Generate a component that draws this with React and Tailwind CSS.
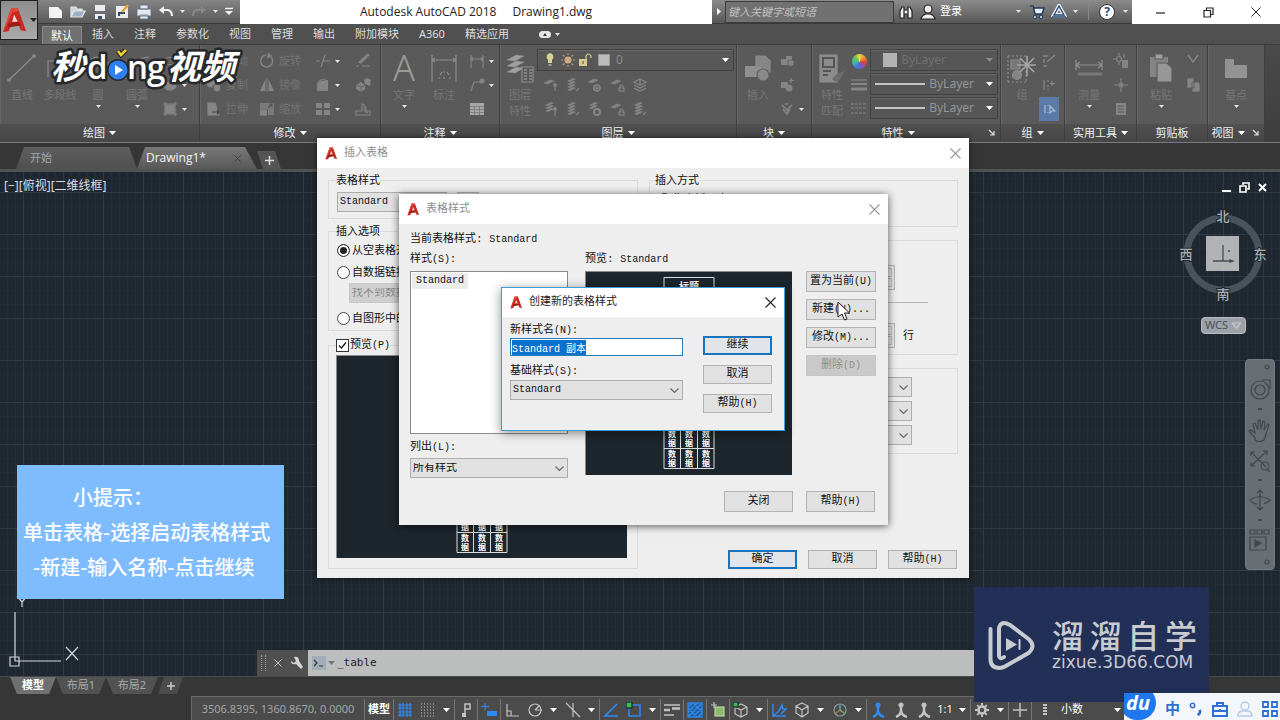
import { useEffect, useRef } from "react";

const UI = "font-['Noto_Sans','Noto_Sans_CJK_SC',sans-serif]";
const DLG = "font-['Liberation_Mono','Noto_Sans_CJK_SC',monospace]";

/* ---------- small shared pieces ---------- */

function Svg({ size = 16, w, h, vb = "0 0 16 16", className = "", children }) {
  return (
    <svg
      width={w || size}
      height={h || size}
      viewBox={vb}
      fill="none"
      stroke="currentColor"
      strokeWidth="1.2"
      aria-hidden="true"
      className={"shrink-0 " + className}
    >
      {children}
    </svg>
  );
}

function Caret({ className = "text-white" }) {
  return (
    <svg width="7" height="4" viewBox="0 0 7 4" fill="currentColor" aria-hidden="true" className={"shrink-0 " + className}>
      <path d="M0 0h7L3.5 4z" />
    </svg>
  );
}

function MiniCaret() {
  return (
    <svg width="5" height="3" viewBox="0 0 5 3" fill="currentColor" aria-hidden="true" className="shrink-0 text-[#e4e4e4]">
      <path d="M0 0h5L2.5 3z" />
    </svg>
  );
}

function Logo({ size = 14 }) {
  return (
    <svg width={size} height={size} viewBox="0 0 28 28" aria-hidden="true" className="shrink-0">
      <path d="M10 1h7l9 25-6-1-2-6h-8l-3 7-6 1z" fill="#c62a21" />
      <path d="M13 8l4 8h-6z" fill="#f3d9d6" />
      <path d="M10 1h7l1 3-7 2-9 20-1 1z" fill="#e5463b" />
      <path d="M7 18l11-2 2 4-14 2z" fill="#9c1a14" />
    </svg>
  );
}

function CloseX({ size = 11, className = "text-[#999]" }) {
  return (
    <svg width={size} height={size} viewBox="0 0 11 11" stroke="currentColor" strokeWidth="1.1" aria-hidden="true" className={className}>
      <path d="M.5.5l10 10M10.5.5l-10 10" />
    </svg>
  );
}

/* ---------- icon drawings ---------- */

const ic = {
  ellipse: <Svg><ellipse cx="8" cy="8" rx="6" ry="3.5" /><path d="M8 8h6" /></Svg>,
  hatch: <Svg><ellipse cx="8" cy="9" rx="6" ry="4" fill="currentColor" /></Svg>,
  region: <Svg><rect x="4" y="4" width="8" height="8" fill="currentColor" /><path d="M1 3h14M1 13h14M3 1v14M13 1v14" /></Svg>,
  move: <Svg><path d="M8 1v14M1 8h14M6 3l2-2 2 2M6 13l2 2 2-2M3 6L1 8l2 2M13 6l2 2-2 2" /></Svg>,
  copy: <Svg><circle cx="5" cy="6" r="4" fill="currentColor" /><circle cx="11" cy="11" r="4" fill="currentColor" stroke="#595959" /></Svg>,
  stretch: <Svg><path d="M2 2h7l4 12H2z" fill="currentColor" /><path d="M6 11h7M11 9l2 2-2 2" stroke="#444" /></Svg>,
  rotate: <Svg><path d="M11 3a6 6 0 1 1-4-1" strokeWidth="1.5" /><path d="M9 0l3 3-4 2" fill="currentColor" /></Svg>,
  mirror: <Svg><path d="M6.500 2v12H1zM9.500 2v12H15z" fill="currentColor" stroke="none" /><path d="M8 1v14" strokeWidth=".8" /></Svg>,
  scale: <Svg><path d="M1 2h14v12H9V8H1z" fill="currentColor" opacity=".75" stroke="none" /><rect x="1.500" y="9" width="6" height="5" fill="currentColor" /><path d="M9 7l4-4M10 3h3v3" stroke="#555" /></Svg>,
  trim: <Svg><path d="M1 8h4M7 8h8M10 2L6 14" /></Svg>,
  fillet: <Svg><path d="M2 14V9q1-6 11-6v11z" fill="currentColor" stroke="none" /><path d="M2 8q2-6 9-6" /></Svg>,
  array: <Svg><path d="M1 2h6v5H1zM9 2h6v5H9zM1 9h6v5H1zM9 9h6v5H9z" fill="currentColor" stroke="none" /></Svg>,
  erase: <Svg><path d="M4 9l9-8 1 1-8 8z" fill="currentColor" /><path d="M1 13h3M7 13h8" /></Svg>,
  explode: <Svg><path d="M1 8l5-3 4 3v4l-4 3-5-3zM9 3l3-2 4 2-1 6-5-2z" fill="currentColor" stroke="none" /><path d="M1 8l5 2 4-2M6 10v5" stroke="#5a5a5a" strokeWidth=".8" /></Svg>,
  offset: <Svg><path d="M1 14h14v-4h-4q0-7-4-7v7H1zM9 6q0 5 4 6" /></Svg>,
  dimlin: <Svg><path d="M2 2v13M14 2v13M2 6h12M4 4.500L2 6l2 1.500M12 4.500L14 6l-2 1.500" /></Svg>,
  leader: <Svg><path d="M2 14L5 5h7" /><circle cx="13" cy="4" r="2" fill="currentColor" /></Svg>,
  table: <Svg><path d="M1 2h14v12H1z" fill="#a8a8a8" stroke="none" /><path d="M1 5.500h14M1 8.500h14M1 11.500h14M5.500 5v9M10.500 5v9" stroke="#777" strokeWidth=".8" /></Svg>,
  cut: <Svg><path d="M3 2l5 7 5-7" strokeWidth="1.500" /></Svg>,
  copyDoc: <Svg><path d="M2 1h7v10H2zM7 5h6l2 2v8H7z" fill="currentColor" stroke="#5b5b5b" strokeWidth=".8" /></Svg>,
  blockNew: <Svg><path d="M2 6h7v6H2zM7 3h6v4H7z" fill="currentColor" stroke="none" /><circle cx="12" cy="10" r="3.200" fill="currentColor" stroke="#595959" strokeWidth=".7" /></Svg>,
  blockEdit: <Svg><path d="M2 5h7v6H2z" fill="currentColor" stroke="none" /><circle cx="10" cy="11" r="3" fill="currentColor" /><path d="M12 1v5M10 3.500h5" /></Svg>,
  attrib: <Svg><path d="M3 4l5 5 5-5M4 8l4 5 3-5M6 3h3" strokeWidth="1.600" /></Svg>,
  grpA: <Svg><path d="M2 3h5M2 13h4M3 6v4M6 9l8-7" strokeWidth="1.500" /></Svg>,
  grpB: <Svg><path d="M3 3v10M7 3v2M7 8v2M7 12v1M11 4v5M9 6.500h5" /></Svg>,
  grpC: <Svg><path d="M4 4v8M7 4v1M7 11v1M9 5l5 5h-3l-2 2z" /></Svg>,
  utilA: <Svg><circle cx="6" cy="6" r="2.500" /><path d="M6 0v3M6 9v3M0 6h3M11 1v4" /><path d="M9 7h6v8H9z" fill="currentColor" stroke="none" /></Svg>,
  utilB: <Svg><path d="M8 1v14M1 8h14M6 6l4 4M10 6l-4 4" /></Svg>,
  utilC: <Svg><path d="M3 2h10v12H3z" fill="currentColor" stroke="none" /><path d="M5 5h6M5 8h6M5 11h6" stroke="#585858" /></Svg>,
  lay1: <Svg><path d="M1 6l6-3 4 1-6 3z" fill="currentColor" strokeWidth=".6" /><circle cx="12" cy="8" r="2" fill="currentColor" stroke="none" /><path d="M12 9v5" /></Svg>,
  lay2: <Svg><path d="M2 4l6-3 3 1-6 3zM2 7l6-3 3 1-6 3zM2 10l6-3 3 1-6 3zM2 13l6-3 3 1-6 3z" fill="currentColor" stroke="none" /><path d="M11 14l3-3" /></Svg>,
  lay3: <Svg><path d="M1 5l6-3 4 1-6 3z" fill="currentColor" strokeWidth=".6" /><circle cx="10" cy="11" r="3" strokeWidth="1.600" /><circle cx="10" cy="11" r="1" fill="currentColor" /></Svg>,
  lay4: <Svg><path d="M1 6l6-3 4 1-6 3z" fill="currentColor" strokeWidth=".6" /><path d="M9 11h5v3H9zM10 11V9q1.500-2 3 0v2" /></Svg>,
  lay5: <Svg><path d="M2 5l6-3 6 3-6 3zM2 8l6 3 6-3M2 11l6 3 6-3M8 1v7" /></Svg>,
  lay6: <Svg><path d="M2 4l6-3 3 1-6 3zM2 7l6-3 3 1-6 3zM2 10l6-3 3 1-6 3z" fill="currentColor" stroke="none" /><circle cx="12" cy="8" r="2" fill="currentColor" stroke="none" /><path d="M12 9v6" /></Svg>,
  lay7: <Svg><path d="M2 4l6-3 3 1-6 3zM2 7l6-3 3 1-6 3z" fill="currentColor" stroke="none" /><circle cx="10" cy="11" r="3" strokeWidth="2" /></Svg>,
};

/* ---------- ribbon ---------- */

function Big({ icon, label, label2, caret, w }) {
  return (
    <button type="button" className={"flex h-[74px] flex-col items-center whitespace-nowrap " + w}>
      <span className="flex h-[38px] items-center text-[#8d8d8d]">{icon}</span>
      <span className="text-[11px] leading-4 text-[#777]">{label}</span>
      {label2 && <span className="text-[11px] leading-4 text-[#777]">{label2}</span>}
      {caret && <span className="mt-0.5 flex"><MiniCaret /></span>}
    </button>
  );
}

function Small({ icon, label, caret, active }) {
  return (
    <button
      type="button"
      className={
        "flex h-6 items-center gap-1 text-[11px] " +
        (active ? "bg-[#5b7aa8] px-1 text-[#a8bbd6]" : "text-[#858585]")
      }
    >
      {icon}
      {label && <span className="text-[#747474]">{label}</span>}
      {caret && <MiniCaret />}
    </button>
  );
}

function Panel({ title, w, caret = true, launcher, children }) {
  return (
    <section className={"flex shrink-0 flex-col border-r border-[#3f3f3f] shadow-[inset_1px_0_0_#676767] " + w}>
      <div className="flex flex-1 items-start pt-1 pl-1">{children}</div>
      <footer className="flex h-[18px] items-center justify-center gap-1 bg-gradient-to-b from-[#505050] to-[#474747] text-[11px] text-[#f0f0f0]">
        <span className={launcher ? "ml-auto" : ""}>{title}</span>
        {caret && <Caret />}
        {launcher && (
          <Svg size={8} vb="0 0 8 8" className="mr-1 ml-auto text-[#ddd]">
            <path d="M1 1l5 5M6 2v4H2" />
          </Svg>
        )}
      </footer>
    </section>
  );
}

function PropBox({ children, dim }) {
  return (
    <button
      type="button"
      className={
        "flex h-[22px] w-[128px] items-center justify-end border border-[#434343] bg-[#565656] pr-1 text-xs shadow-[inset_0_1px_0_#686868] " +
        (dim ? "text-[#717171]" : "text-[#959595]")
      }
    >
      {children}
    </button>
  );
}

function Ribbon() {
  return (
    <div className="flex h-[99px] overflow-hidden border-t border-b border-t-[#3c3c3c] border-b-[#7b7b7b] bg-gradient-to-b from-[#4a4a4a] to-[#3e3e3e]">
      <div className="flex bg-[#5a5a5a]">
        <Panel title="绘图" w="w-[200px]">
          <Big w="w-[36px]" label="直线" icon={<Svg size={30} vb="0 0 30 30"><path d="M2 27L27 3" /><path d="M1 26h2v2H1zM26 2h2v2h-2z" /></Svg>} />
          <Big w="w-[40px]" label="多段线" icon={<Svg size={30} vb="0 0 30 30"><path d="M3 24V8h16q8 8 0 16h-6" /></Svg>} />
          <Big w="w-[36px]" label="圆" caret icon={<Svg size={30} vb="0 0 30 30"><circle cx="15" cy="15" r="11" /><path d="M15 15l8-8" /></Svg>} />
          <Big w="w-[42px]" label="圆弧" caret icon={<Svg size={30} vb="0 0 30 30"><path d="M3 26Q6 6 27 4" /></Svg>} />
          <div className="flex flex-col pl-1">
            <Small icon={ic.ellipse} caret />
            <Small icon={ic.hatch} caret />
            <Small icon={ic.region} caret />
          </div>
        </Panel>
        <Panel title="修改" w="w-[181px]">
          <div className="flex w-[55px] flex-col pl-0.5">
            <Small icon={ic.move} label="移动" />
            <Small icon={ic.copy} label="复制" />
            <Small icon={ic.stretch} label="拉伸" />
          </div>
          <div className="flex w-[52px] flex-col">
            <Small icon={ic.rotate} label="旋转" />
            <Small icon={ic.mirror} label="镜像" />
            <Small icon={ic.scale} label="缩放" />
          </div>
          <div className="flex w-[40px] flex-col pl-1">
            <Small icon={ic.trim} caret />
            <Small icon={ic.fillet} caret />
            <Small icon={ic.array} caret />
          </div>
          <div className="flex flex-col pl-1">
            <Small icon={ic.erase} />
            <Small icon={ic.explode} />
            <Small icon={ic.offset} />
          </div>
        </Panel>
        <Panel title="注释" w="w-[119px]">
          <Big w="w-[38px]" label="文字" caret icon={<span className="font-['Noto_Sans',sans-serif] text-[36px] leading-none font-light text-[#9b9b9b]">A</span>} />
          <Big w="w-[42px]" label="标注" icon={<Svg size={30} vb="0 0 30 30"><path d="M3 2v27M27 2v27M3 7h24M6 5L3 7l3 2M24 5l3 2-3 2" /><path d="M9 25h2M14 19h2M14 25h2M20 25h2M11 22l2-3M18 19l2 3" /></Svg>} />
          <div className="flex flex-col pl-1">
            <Small icon={ic.dimlin} caret />
            <Small icon={ic.leader} caret />
            <Small icon={ic.table} />
          </div>
        </Panel>
        <Panel title="图层" w="w-[237px]">
          <Big
            w="w-[32px]"
            label="图层"
            label2="特性"
            icon={
              <Svg size={30} vb="0 0 30 30">
                <path d="M2 7l9-5 8 1-9 5zM2 13l9-5 8 1-9 5zM2 19l9-5 8 1-9 5z" fill="#a0a0a0" strokeWidth=".5" />
                <path d="M17 14h11v15H17z" fill="#595959" />
                <path d="M19 17h3M24 17h3M19 20h3M24 20h3M19 23h3M24 23h3M19 26h3M24 26h3" strokeWidth="1.500" />
              </Svg>
            }
          />
          <div className="flex flex-1 flex-col pr-0.5">
            <button type="button" className="ml-px flex h-[22px] items-center gap-0.5 border border-[#414141] bg-[#585858] px-1 text-xs text-[#8d8d8d] shadow-[inset_0_1px_0_#6a6a6a]">
              <Svg><path d="M8 1a4 4 0 0 0-2 7v3h4V8a4 4 0 0 0-2-7z" fill="#dcd296" stroke="none" /><path d="M6.500 13h3" stroke="#ccc" /></Svg>
              <Svg><circle cx="8" cy="8" r="3.500" fill="#d0a884" stroke="none" /><path d="M8 1v2M8 13v2M1 8h2M13 8h2M3 3l1.500 1.500M11.500 11.500L13 13M13 3l-1.500 1.500M3 13l1.500-1.500" stroke="#b99c80" /></Svg>
              <Svg><path d="M1 7h8v7H1z" fill="#d6cc90" stroke="none" /><path d="M8 7V4q2-4 5 0v2" stroke="#d0c890" /><path d="M5 9v3" stroke="#665" /></Svg>
              <span className="ml-0.5 size-3 border border-[#999] bg-[#bcbcbc]" />
              <span className="ml-1">0</span>
              <span className="ml-auto"><Caret /></span>
            </button>
            <div className="mt-0.5 grid w-[115px] grid-cols-5 justify-items-center pl-1">
              <Small icon={ic.lay1} /><Small icon={ic.lay2} /><Small icon={ic.lay3} /><Small icon={ic.lay4} /><Small icon={ic.lay5} />
              <Small icon={ic.lay6} /><Small icon={ic.lay2} /><Small icon={ic.lay7} /><Small icon={ic.lay4} /><Small icon={ic.lay2} />
            </div>
          </div>
        </Panel>
        <Panel title="块" w="w-[75px]">
          <Big
            w="w-[34px]"
            label="插入"
            icon={
              <Svg size={30} vb="0 0 30 30">
                <path d="M13 3h9l5 5v11H13z" fill="#858585" />
                <path d="M2 13h16v11H2z" fill="#8f8f8f" stroke="none" />
                <circle cx="20" cy="22" r="6" fill="#8a8a8a" stroke="#616161" />
              </Svg>
            }
          />
          <div className="flex flex-col pl-1">
            <Small icon={ic.blockNew} />
            <Small icon={ic.blockEdit} />
            <Small icon={ic.attrib} caret />
          </div>
        </Panel>
        <Panel title="特性" w="w-[189px]" launcher>
          <Big
            w="w-[32px]"
            label="特性"
            label2="匹配"
            icon={
              <Svg size={30} vb="0 0 30 30">
                <path d="M3 2h17v27H3z" fill="#8b8b8b" />
                <path d="M6 5h11v9H6zM6 18h8M6 22h5" stroke="#555" strokeWidth="2" />
                <path d="M15 26l5-5 9-4-6 9-4 3z" fill="#6d6d6d" stroke="none" />
              </Svg>
            }
          />
          <div className="flex w-[22px] flex-col items-center">
            <span className="flex h-6 items-center">
              <span className="size-[15px] rounded-full bg-[conic-gradient(#e9d84a,#f08a30,#d9413b,#7d55c9,#3d7be0,#46b7a5,#63c24a,#e9d84a)]" />
            </span>
            <Small icon={<Svg><path d="M0 3h16" /><path d="M0 7h16" strokeWidth="2" /><path d="M0 12h16" strokeWidth="3" /></Svg>} />
            <Small icon={<Svg><path d="M0 3h16M0 7h16M0 12h16" strokeDasharray="3 1" /></Svg>} />
          </div>
          <div className="flex flex-col gap-0.5">
            <PropBox dim>
              <span className="mr-auto ml-3 size-[14px] shrink-0 bg-[#b3b3b3]" />
              <span>ByLayer</span>
              <Caret className="ml-10 text-[#8a8a8a]" />
            </PropBox>
            <PropBox>
              <span className="mx-1 h-0.5 flex-1 bg-[#c4c4c4]" />ByLayer<Caret className="ml-3 text-white" />
            </PropBox>
            <PropBox>
              <span className="mx-1 h-0.5 flex-1 bg-[#c4c4c4]" />ByLayer<Caret className="ml-3 text-white" />
            </PropBox>
          </div>
        </Panel>
        <Panel title="组" w="w-[64px]">
          <Big
            w="w-[34px]"
            label="组"
            icon={
              <Svg size={30} vb="0 0 30 30">
                <path d="M1 3h18M1 29h18M1 3v26M19 18v11" strokeDasharray="2 2" />
                <path d="M4 7h9v9H4z" fill="#777" /><circle cx="10" cy="22" r="4.500" fill="#858585" />
                <path d="M20 3v20M10 12h19M13 5l14 14M27 5L13 19" stroke="#a5a5a5" strokeWidth="1.600" />
              </Svg>
            }
          />
          <div className="flex flex-col items-center">
            <Small icon={ic.grpA} />
            <Small icon={ic.grpB} />
            <Small icon={<span className="-mx-0.5">{ic.grpC}</span>} active />
          </div>
        </Panel>
        <Panel title="实用工具" w="w-[72px]">
          <Big w="w-[40px]" label="测量" caret icon={<Svg size={30} vb="0 0 30 30"><path d="M2 7v10M28 7v10M2 12h26M6 9l-4 3 4 3M24 9l4 3-4 3" /><path d="M4 21h24" strokeWidth="3" opacity=".6" /></Svg>} />
          <div className="flex flex-col pl-1">
            <Small icon={ic.utilA} /><Small icon={ic.utilB} /><Small icon={ic.utilC} />
          </div>
        </Panel>
        <Panel title="剪贴板" w="w-[71px]" caret={false}>
          <Big
            w="w-[40px]"
            label="粘贴"
            caret
            icon={
              <Svg size={30} vb="0 0 30 30">
                <path d="M4 4h18v20H4z" fill="#848484" stroke="none" /><path d="M9 1h8v5H9z" fill="#a0a0a0" stroke="#5d5d5d" />
                <path d="M11 10h10l5 5v14H11z" fill="#979797" stroke="#5d5d5d" />
              </Svg>
            }
          />
          <div className="flex flex-col pl-1">
            <Small icon={ic.cut} /><Small icon={ic.copyDoc} />
          </div>
        </Panel>
        <Panel title="视图" w="w-[57px]" launcher>
          <Big w="w-[48px]" label="基点" caret icon={<Svg size={30} vb="0 0 30 30"><path d="M4 6h9v6h13v13H4z" fill="#929292" stroke="none" /></Svg>} />
        </Panel>
      </div>
    </div>
  );
}

/* ---------- header ---------- */

const menuTabs = ["默认", "插入", "注释", "参数化", "视图", "管理", "输出", "附加模块", "A360", "精选应用"];

function Header() {
  return (
    <header className="flex bg-[#505050]">
      <button type="button" className="flex h-10 w-[38px] items-center justify-center gap-0.5 border border-[#1d1d1d] bg-gradient-to-b from-[#8d8d8d] to-[#aaa]">
        <Logo size={26} />
        <Caret className="text-[#222]" />
      </button>
      <div className="flex min-w-0 flex-1 flex-col">
        <div className="flex h-6 bg-white">
          <div className="flex w-[202px] items-center gap-1.5 border-b border-[#3a3a3a] bg-gradient-to-b from-[#858585] to-[#5a5a5a] pl-2.5 text-[#f2f2f2]">
            <Svg><path d="M1 3h9l4 4v7H1z" fill="#f3f3f3" stroke="none" /></Svg>
            <Svg><path d="M1 13V3h5l1 2h5v2" fill="#cfd6df" stroke="#e5e5e5" /><path d="M1 13l3-6h11l-3 6z" fill="#9fb0c4" stroke="#e8e8e8" /></Svg>
            <Svg><path d="M3 1h10v6H3zM3 10h10v5H3z" fill="#e9edf2" stroke="none" /><path d="M6 12h4v3H6z" fill="#3a4a60" stroke="none" /></Svg>
            <Svg><path d="M2 2h12v12H2z" fill="#e9edf2" stroke="none" /><path d="M5 12v-3h6" stroke="#34465e" strokeWidth="2" /><path d="M8 8l6-7" stroke="#eaa13a" strokeWidth="2.500" /></Svg>
            <Svg><path d="M4 1h8v4H4zM1 5h14v7H1zM4 11h8v4H4z" fill="#e3e8ee" stroke="#5c6d82" strokeWidth=".8" /></Svg>
            <Svg><path d="M3 6h7q4 1 4 6" strokeWidth="2.200" /><path d="M1 6l5-4v8z" fill="currentColor" stroke="none" /></Svg>
            <MiniCaret />
            <Svg className="text-[#888]"><path d="M13 6H6q-4 1-4 6" strokeWidth="2.200" /><path d="M15 6l-5-4v8z" fill="currentColor" stroke="none" /></Svg>
            <MiniCaret />
            <Svg size={10} vb="0 0 10 10"><path d="M1 1.500h8" strokeWidth="1.500" /><path d="M1 4h8L5 8z" fill="currentColor" stroke="none" /></Svg>
          </div>
          <h1 className="flex flex-1 items-center justify-center gap-4 font-['Open_Sans',sans-serif] text-xs text-[#222]">
            <span>Autodesk AutoCAD 2018</span>
            <span>Drawing1.dwg</span>
          </h1>
          <div className="flex w-[420px] items-center border-b border-[#3a3a3a] bg-gradient-to-b from-[#8b8b8b] to-[#585858] text-white">
            <span className="flex w-[13px] justify-center"><svg width="4" height="7" fill="#fff" aria-hidden="true"><path d="M0 0l4 3.500L0 7z" /></svg></span>
            <input
              aria-label="键入关键字或短语"
              placeholder="键入关键字或短语"
              className="h-[22px] w-[169px] border border-[#3d3d3d] bg-[#717171] px-0.5 text-[11px] italic placeholder:text-[#c0c0c0]"
            />
            <Svg className="ml-1"><path d="M2 14V7l2-4h2v11zM10 14V3h2l2 4v7zM6 6h4v4H6z" fill="#eee" stroke="#222" /></Svg>
            <Svg className="ml-1.5"><circle cx="8" cy="5" r="4" fill="#eee" stroke="#222" /><path d="M1 15q1-4 5-5h4q4 1 5 5z" fill="#eee" stroke="#222" /></Svg>
            <span className="ml-1 text-[11px]">登录</span>
            <span className="mr-2 ml-auto"><MiniCaret /></span>
            <Svg><path d="M1 2h3l2 8h7l2-6H5" fill="#e9f0fa" stroke="#243a5e" strokeWidth="1.500" /><circle cx="6" cy="13" r="1.500" fill="#fff" stroke="#243a5e" /><circle cx="12" cy="13" r="1.500" fill="#fff" stroke="#243a5e" /></Svg>
            <Svg className="ml-1.5"><path d="M8 2l5 9H3z" stroke="#e4ecf6" strokeWidth="4" /><path d="M1 12h14" stroke="#e4ecf6" strokeWidth="4" /><path d="M8 2l5 9H3zM1 13h14" stroke="#29466f" strokeWidth="1.300" /></Svg>
            <span className="ml-1.5"><MiniCaret /></span>
            <span className="mx-2.5 h-4 w-px bg-[#888]" />
            <span className="flex size-4 items-center justify-center rounded-full border border-[#333] bg-white text-xs leading-none font-bold text-[#234a8c]">?</span>
            <span className="mr-1 ml-2"><MiniCaret /></span>
          </div>
          <div className="flex w-[148px] items-center justify-around pl-1 text-[#222]">
            <button type="button" aria-label="最小化"><Svg size={11} vb="0 0 11 11"><path d="M1 6h9" /></Svg></button>
            <button type="button" aria-label="还原"><Svg size={11} vb="0 0 11 11"><path d="M1 3.500h6.500V10H1zM3.500 3V1H10v6.500H8" /></Svg></button>
            <button type="button" aria-label="关闭"><CloseX size={10} className="text-[#222]" /></button>
          </div>
        </div>
        <nav className="flex h-5 items-center pl-1 text-[11px] text-[#dcdcdc]">
          {menuTabs.map((t, i) => (
            <a
              key={t}
              href="#"
              className={
                "flex h-full items-center whitespace-nowrap " +
                (i === 0 ? "mt-1 h-[17px] border border-b-0 border-[#888] bg-[#717171] px-2 text-white" : "px-[10px]")
              }
            >
              {t}
            </a>
          ))}
          <span className="ml-5 flex items-center gap-1">
            <span className="flex h-[7px] w-3 items-center justify-center rounded-sm bg-[#e6e6e6]">
              <svg width="4" height="3" fill="#333" aria-hidden="true"><path d="M2 0l2 3H0z" /></svg>
            </span>
            <MiniCaret />
          </span>
        </nav>
      </div>
    </header>
  );
}

function DocTabs() {
  return (
    <div className="flex h-[29px] items-end border-b-[3px] border-[#525252] bg-[#363636] pl-4 text-[11px]">
      <a href="#" className="flex h-[22px] w-[121px] items-center bg-gradient-to-b from-[#5f5f5f] to-[#505050] pl-[14px] text-[#a5a5a5] [clip-path:polygon(0_100%,8px_0,113px_0,100%_100%)]">开始</a>
      <a href="#" className="flex h-[22px] w-[120px] items-center justify-between bg-gradient-to-b from-[#797979] to-[#585858] pr-4 pl-[9px] font-['Open_Sans',sans-serif] text-xs text-[#f4f4f4] [clip-path:polygon(0_100%,8px_0,108px_0,100%_100%)]">
        Drawing1*
        <CloseX size={7} className="text-[#333]" />
      </a>
      <button type="button" aria-label="新图形" className="flex h-[18px] w-[24px] items-center justify-center bg-[#555] text-[#ddd] [clip-path:polygon(0_0,18px_0,100%_100%,6px_100%)]">
        <Svg size={9} vb="0 0 9 9"><path d="M4.500 0v9M0 4.500h9" strokeWidth="1.500" /></Svg>
      </button>
    </div>
  );
}

/* ---------- drawing area ---------- */

function Compass() {
  return (
    <div className="mt-0.5 flex flex-col items-center">
      <svg width="92" height="98" viewBox="0 0 92 98" aria-hidden="true" className="font-['Noto_Sans_CJK_SC',sans-serif] text-[13px] font-medium">
        <circle cx="46" cy="49" r="36" fill="none" stroke="#4a525b" strokeWidth="7" />
        <rect x="29" y="31" width="33" height="35" fill="#b0b2b4" />
        <path d="M46 40v16M36 56h20M56 56l-3-1v2zM51 46h2" stroke="#4a4d50" strokeWidth="1.300" fill="none" />
        <g fill="#a9aeb3" textAnchor="middle" stroke="#1f2830" strokeWidth="2" paintOrder="stroke">
          <text x="46" y="16">北</text>
          <text x="46" y="94">南</text>
          <text x="9" y="54">西</text>
          <text x="83" y="54">东</text>
        </g>
      </svg>
      <button type="button" className="mt-3.5 flex h-[17px] w-[45px] items-center justify-center gap-1 rounded border border-[#b9bdc3] bg-[#9da1a8] text-[11px] text-[#4b5056]">
        WCS
        <Svg size={9} vb="0 0 9 9" className="text-[#c5c8cc]"><path d="M0 2h9L4.500 7z" /></Svg>
      </button>
    </div>
  );
}

function NavBar() {
  return (
    <div className="absolute top-[187px] right-[5px] flex h-[211px] w-[30px] flex-col items-center justify-between rounded border border-[#747b82] bg-[#676e74] py-1 text-[#42484e]">
      <Svg size={6} vb="0 0 6 6" className="mr-1 self-end"><circle cx="3" cy="3" r="2" /></Svg>
      <Svg size={22} vb="0 0 22 22"><circle cx="11" cy="12" r="9" /><circle cx="11" cy="12" r="5" /><path d="M13 2h8v9" /></Svg>
      <MiniDot />
      <Svg size={24} vb="0 0 24 24"><path d="M7 20l-6-7 2-1 4 3-2-9 2-1 3 7V3l2-1 1 9 2-8 2 1-1 8 4-6 1 1-3 9-2 6q-5 3-9 0z" /></Svg>
      <Svg size={22} vb="0 0 22 22"><path d="M2 2l15 15M18 1L2 16M2 6V2h4M14 1h4v4M2 12v4h4" /><circle cx="16" cy="16" r="4" /><path d="M18 19l3 3" /></Svg>
      <MiniDot />
      <Svg size={22} vb="0 0 22 22"><path d="M11 1v20M8 4l3-3 3 3M8 18l3 3 3-3M1 11q10-7 20 0-4 4-6 3M1 11q3 4 7 4" /></Svg>
      <MiniDot />
      <Svg size={22} vb="0 0 22 22"><path d="M1 1h5v4H1zM8 1h5v4H8zM15 1h5v4h-5zM1 8h16v13H1z" /><path d="M6 11l6 3-6 4z" fill="currentColor" /></Svg>
      <Svg size={6} vb="0 0 6 6" className="mr-1 self-end"><circle cx="3" cy="3" r="2" /></Svg>
    </div>
  );
}

function MiniDot() {
  return <span className="h-0.5 w-1 bg-[#42484e]" />;
}

function Canvas() {
  return (
    <main className="relative flex min-h-[504px] flex-1 items-start justify-between bg-[#1f2830] bg-[linear-gradient(to_right,#2f3a44_1px,transparent_1px),linear-gradient(to_bottom,#2f3a44_1px,transparent_1px),linear-gradient(to_right,#242e37_1px,transparent_1px),linear-gradient(to_bottom,#222b34_1px,transparent_1px)] bg-[size:40px_42px,40px_42px,8px_42px,40px_14px] bg-[position:23px_20px]">
      <p className="py-1.5 pl-1 text-xs text-[#dcdfe2]">[−][俯视][二维线框]</p>
      <div className="flex flex-col items-center pr-[11px]">
        <div className="flex w-full items-center justify-end gap-2 py-2.5 pr-0.5 text-white">
          <span className="flex h-2 items-end"><span className="h-0.5 w-[9px] bg-white" /></span>
          <Svg size={11} vb="0 0 11 11"><path d="M1 4h6v6H1zM4 3V1h6v6H8" strokeWidth="1.600" /></Svg>
          <Svg size={9} vb="0 0 9 9"><path d="M1 1l7 7M8 1L1 8" strokeWidth="2" /></Svg>
        </div>
        <Compass />
      </div>
      <NavBar />

      <svg width="80" height="80" viewBox="0 0 80 80" fill="none" stroke="#d5d8da" strokeWidth="1.200" aria-hidden="true" className="absolute bottom-[7px] left-2">
        <path d="M7 23v49h46M2 68h9v9H2zM9 7l5 6 5-6M14 13v5M58 58l12 13M70 58L58 71" />
      </svg>

      <div className="absolute bottom-0 left-[257px] flex h-[26px] w-[766px] items-stretch">
        <div className="flex w-[51px] items-center gap-2 bg-[#505050] px-1 text-[#d5d5d5]">
          <span className="h-4 w-[5px] border-x border-dotted border-[#999]" />
          <CloseX size={8} className="text-[#ddd]" />
          <Svg size={14} vb="0 0 14 14"><path d="M1 5l3 2 2-2-2-4q5-1 5 4l4 6-2 2-5-5q-5 1-5-3z" fill="currentColor" stroke="none" /></Svg>
        </div>
        <label className="flex flex-1 items-center gap-0.5 bg-[#bcbebd] pl-1">
          <Svg size={14} vb="0 0 14 14" className="bg-[#9fadb8] text-[#333]"><path d="M2 4l3 3-3 3M7 10h4" /></Svg>
          <Caret className="text-[#777]" />
          <input
            aria-label="命令"
            defaultValue="_table"
            className="min-w-0 flex-1 bg-transparent font-['DejaVu_Sans_Mono','Liberation_Mono',monospace] text-[11px] text-[#222] outline-none"
          />
        </label>
      </div>
    </main>
  );
}

/* ---------- footer ---------- */

function StatusCell({ sep, w = "w-[23px]", blue, children }) {
  return (
    <button
      type="button"
      className={
        "flex h-full shrink-0 items-center justify-center " + w + " " +
        (sep ? "border-l border-[#757575] " : "") +
        (blue ? "text-[#2f8bf2]" : "text-[#c4c4c4]")
      }
    >
      {children}
    </button>
  );
}

function Drop() {
  return (
    <StatusCell w="w-[15px]"><Caret /></StatusCell>
  );
}

const person = (
  <Svg><path d="M8 8V5M3 15q5-2 5-7 0 5 6 7" strokeWidth="2.500" /><circle cx="8" cy="3" r="2" fill="currentColor" /></Svg>
);
const cube = (
  <Svg><path d="M8 1l6 3v7l-6 4-6-4V4zM2 4l6 4 6-4M8 8v7" /></Svg>
);

function Footer() {
  return (
    <footer className="bg-[#363636] text-[11px]">
      <div className="flex h-5 items-start border-t border-[#4a4a4a] pl-2.5 text-[#aaa]">
        <a href="#" className="flex h-[17px] w-[46px] items-center justify-center bg-[#707070] font-bold text-white [clip-path:polygon(0_0,100%_0,39px_100%,7px_100%)]">模型</a>
        <a href="#" className="flex h-[17px] w-[50px] items-center justify-center bg-[#525252] [clip-path:polygon(0_0,100%_0,43px_100%,7px_100%)]">布局1</a>
        <a href="#" className="flex h-[17px] w-[52px] items-center justify-center bg-[#525252] [clip-path:polygon(0_0,100%_0,45px_100%,7px_100%)]">布局2</a>
        <button type="button" aria-label="新建布局" className="flex h-[17px] w-[25px] items-center justify-center bg-[#4c4c4c] text-[#ccc] [clip-path:polygon(6px_0,100%_0,19px_100%,0_100%)]">
          <Svg size={8} vb="0 0 8 8"><path d="M4 0v8M0 4h8" strokeWidth="1.500" /></Svg>
        </button>
      </div>
      <div className="flex h-6 pl-[191px]">
        <div className="flex flex-1 items-center border-t border-l border-[#6a6a6a] bg-[#4b4b4b] pt-0.5">
          <span className="flex w-[172px] justify-center text-[11px] text-[#a5a5a5]">3506.8395, 1360.8670, 0.0000</span>
          <StatusCell sep w="w-[29px]"><span className="font-bold text-white">模型</span></StatusCell>
          <StatusCell sep blue><Svg><path d="M3 1v14M6 1v14M10 1v14M13 1v14M1 3h14M1 6h14M1 10h14M1 13h14" /></Svg></StatusCell>
          <StatusCell><Svg><path d="M1 2h14M1 5h14M1 8h14M1 11h14M1 14h14" strokeDasharray="1 2" /></Svg></StatusCell>
          <Drop />
          <StatusCell sep><Svg><path d="M7 14V2h5v5H7" strokeWidth="1.500" /><rect x="4" y="11" width="4" height="4" fill="currentColor" stroke="none" /></Svg></StatusCell>
          <StatusCell sep blue><Svg><path d="M4 1v7M0 4.500h8" /><rect x="6" y="9" width="10" height="5" fill="currentColor" stroke="none" /></Svg></StatusCell>
          <StatusCell sep><Svg><path d="M3 2v12h12M3 9h4v5" /></Svg></StatusCell>
          <StatusCell><Svg><circle cx="8" cy="8" r="6" /><path d="M8 8h7M8 8l4-4" /></Svg></StatusCell>
          <Drop />
          <StatusCell><Svg><path d="M1 1l14 14M8 1v14" /></Svg></StatusCell>
          <Drop />
          <StatusCell sep blue><Svg><path d="M14 2L2 14h13" strokeWidth="1.600" /></Svg></StatusCell>
          <StatusCell blue><Svg><path d="M3 3h11v11H3z" strokeWidth="1.500" /><rect x="0" y="0" width="6" height="6" fill="#38c247" stroke="#123" /></Svg></StatusCell>
          <Drop />
          <StatusCell sep><Svg><path d="M0 3h16M0 13h10" strokeWidth="1.500" /><path d="M0 8h6M8 6.500h8" strokeWidth="2.500" /></Svg></StatusCell>
          <StatusCell sep blue><Svg><rect x="1" y="1" width="14" height="14" fill="#235f9f" /><path d="M1 5l4-4M1 10l9-9M1 15L15 1M6 15l9-9M11 15l4-4M1 6l9 9M6 1l9 9" /></Svg></StatusCell>
          <StatusCell sep><Svg><rect x="5" y="5" width="9" height="9" fill="#8dba6a" stroke="#bcd7a5" /><path d="M4 0v6M1 3h6" /></Svg></StatusCell>
          <StatusCell sep><Svg><path d="M8 2l6 3v7l-6 3-6-3V5zM2 5l6 3 6-3M8 8v7" /><rect x="0" y="0" width="5" height="5" fill="#38c247" stroke="#123" /></Svg></StatusCell>
          <Drop />
          <StatusCell sep blue><Svg><path d="M2 2v12h13M2 14l6-5M8 9l3-6 1 4h3l-5 5" strokeWidth="1.500" /></Svg></StatusCell>
          <StatusCell>{cube}</StatusCell>
          <Drop />
          <StatusCell><Svg><circle cx="8" cy="8" r="6" stroke="#8ba09a" /><path d="M8 8V3" stroke="#5bb6d8" /><path d="M8 8l-4 3" stroke="#d56a5a" /><path d="M8 8l4 3" stroke="#72c36a" /></Svg></StatusCell>
          <Drop />
          <StatusCell sep blue>{person}</StatusCell>
          <StatusCell>{person}</StatusCell>
          <StatusCell>{person}</StatusCell>
          <StatusCell w="w-5"><span className="font-['Open_Sans',sans-serif] text-[11px] text-white">1:1</span></StatusCell>
          <Drop />
          <StatusCell sep><Svg size={14}><circle cx="8" cy="8" r="4" strokeWidth="3" /><path d="M8 0v3M8 13v3M0 8h3M13 8h3M2.500 2.500l2 2M11.500 11.500l2 2M13.500 2.500l-2 2M4.500 11.500l-2 2" strokeWidth="2.200" /></Svg></StatusCell>
          <Drop />
          <StatusCell sep><Svg><path d="M8 1v14M1 8h14" strokeWidth="1.500" /></Svg></StatusCell>
          <StatusCell sep><Svg><path d="M10 2v12" strokeWidth="4" strokeDasharray="2 1" /></Svg></StatusCell>
          <StatusCell w="w-9"><span className="text-white">小数</span></StatusCell>
          <span className="ml-5"><Drop /></span>
        </div>
      </div>
    </footer>
  );
}

/* ---------- dialog controls ---------- */

function La({ children }) {
  return <span className="text-[10px]">{children}</span>;
}

function Btn({ w = "w-[69px]", h = "h-[19px]", tone = "plain", children }) {
  const tones = {
    plain: "border border-[#b2b2b2] bg-[#e1e1e1] text-[#111]",
    primary: "border-2 border-[#1a74bd] bg-[#e1e5e9] text-[#111]",
    off: "border border-[#c4c4c4] bg-[#c9c9c9] text-[#8f8f8f]",
  };
  return (
    <button type="button" disabled={tone === "off"} className={"flex shrink-0 items-center justify-center leading-none whitespace-nowrap " + w + " " + h + " " + tones[tone]}>
      <span>{children}</span>
    </button>
  );
}

function Select({ id, label, options, className = "", size = "text-[11px]", disabled }) {
  return (
    <span className={"grid items-center " + className}>
      <select
        id={id}
        aria-label={label}
        disabled={disabled}
        className={
          "col-start-1 row-start-1 h-5 w-full appearance-none border px-0.5 leading-none " + size + " " +
          (disabled ? "border-[#c8c8c8] bg-[#cfcfcf] text-[#8a8a8a]" : "border-[#adadad] bg-[#e1e1e1] text-[#111]")
        }
      >
        {options.map((o) => <option key={o}>{o}</option>)}
      </select>
      <Svg size={9} vb="0 0 9 9" className="pointer-events-none col-start-1 row-start-1 mr-1 justify-self-end text-[#666]">
        <path d="M.5 2.500l4 4 4-4" />
      </Svg>
    </span>
  );
}

function Radio({ name, checked, children }) {
  return (
    <label className="flex h-[22px] items-center gap-0.5">
      <input
        type="radio"
        name={name}
        defaultChecked={checked}
        className="size-[13px] appearance-none rounded-full border border-[#444] bg-white checked:bg-[#222] checked:shadow-[inset_0_0_0_2px_#fff]"
      />
      <span className="pt-0.5 leading-4">{children}</span>
    </label>
  );
}

function Window({ title, className, titleClass, active, children }) {
  return (
    <section role="dialog" aria-label={title} className={"absolute flex flex-col bg-[#eee] text-[11px] text-[#111] " + DLG + " " + className}>
      <div className={"flex shrink-0 items-center gap-1.5 bg-white px-2 " + titleClass}>
        <Logo size={13} />
        <h2 className={active ? "text-[#222]" : "text-[#8d8d8d]"}>{title}</h2>
        <button type="button" aria-label="关闭" className="ml-auto"><CloseX className={active ? "text-[#222]" : "text-[#999]"} /></button>
      </div>
      {children}
    </section>
  );
}

function TablePreview() {
  const rows = [54, 74, 94, 114, 134, 154, 174];
  return (
    <svg width="53" height="202" viewBox="0 0 53 202" aria-hidden="true" className="font-['Noto_Sans_CJK_SC',sans-serif] text-[8px] font-bold">
      <path d="M1 5.500h50v191H1zM1 25h50M1 56h50M1 76h50M1 96h50M1 116h50M1 136h50M1 156.500h50M1 176.500h50M17.500 25v171M34.500 25v171" fill="none" stroke="#d9dde0" />
      <text x="26" y="18" textAnchor="middle" fill="#fff" fontSize="10">标题</text>
      {rows.map((y) =>
        [9, 26, 43].map((x) => (
          <g key={x + "-" + y} fill="#fff" textAnchor="middle">
            <text x={x} y={y + 11}>数</text>
            <text x={x} y={y + 20}>据</text>
          </g>
        ))
      )}
    </svg>
  );
}

function Spin() {
  return (
    <span className="flex h-[25px] w-[60px] justify-end border border-[#b5b5b5] bg-[#e6e6e6] p-0.5">
      <span className="flex w-2 flex-col gap-px">
        <span className="flex-1 border border-[#c0c0c0]" />
        <span className="flex-1 border border-[#c0c0c0]" />
      </span>
    </span>
  );
}

function InsertTableDialog() {
  const group = "border border-[#dadada]";
  return (
    <Window title="插入表格" titleClass="h-[30px]" className="top-[138px] left-[317px] w-[652px] shadow-[0_0_6px_rgba(0,0,0,0.6)]">
      <div className="flex gap-[11px] px-[11px] pt-1 pb-[9px]">
        <div className="flex w-[310px] flex-col">
          <fieldset className={"px-2 pb-1.5 " + group}>
            <legend className="-ml-px h-4 leading-[18px]">表格样式</legend>
            <div className="mt-1 flex gap-2.5">
              <Select label="表格样式" options={["Standard"]} className="w-[110px]" size="text-[10px]" />
              <Btn w="w-[22px]">{null}</Btn>
            </div>
          </fieldset>
          <fieldset className={"mt-1 px-2 pb-px " + group}>
            <legend className="-ml-px h-4 leading-[18px]">插入选项</legend>
            <Radio name="src" checked>从空表格开始<La>(S)</La></Radio>
            <Radio name="src">自数据链接<La>(L)</La></Radio>
            <Select label="数据链接" options={["找不到数据链接"]} className="ml-3 w-[200px]" disabled />
            <div className="pt-1"><Radio name="src">自图形中的对象数据</Radio></div>
          </fieldset>
          <fieldset className={"mt-1.5 flex flex-col px-2 pb-2.5 " + group}>
            <legend className="-ml-px h-4 leading-[18px]">
              <label className="flex h-4 items-center gap-px">
                <span className="grid size-[13px] place-items-center border border-[#333] bg-white">
                  <input type="checkbox" defaultChecked className="peer col-start-1 row-start-1 size-full appearance-none" />
                  <Svg size={9} vb="0 0 9 9" className="pointer-events-none invisible col-start-1 row-start-1 peer-checked:visible"><path d="M1 4.500l2.500 2.500L8 1.500" /></Svg>
                </span>
                <span className="leading-4">预览<La>(P)</La></span>
              </label>
            </legend>
            <div className="mt-0.5 -ml-px flex h-[203px] w-[291px] justify-center border-t border-l border-[#888] bg-[#1d262d]">
              <TablePreview />
            </div>
          </fieldset>
        </div>
        <div className="flex flex-1 flex-col">
          <fieldset className={"h-[55px] px-2 " + group}>
            <legend className="ml-[-3px] h-4 leading-[18px]">插入方式</legend>
            <Radio name="how" checked>指定插入点<La>(I)</La></Radio>
          </fieldset>
          <div className={"mt-[13px] flex h-[115px] flex-col pt-6 pr-[29px] " + group}>
            <div className="flex pl-[185px]"><Spin /></div>
            <span className="mt-3 h-px bg-[#b8b8b8]" />
            <div className="mt-5 flex items-center gap-2 pl-[185px]"><Spin /><span className="pt-0.5">行</span></div>
          </div>
          <div className={"mt-[13px] flex flex-col gap-1 py-2 pr-[45px] pl-[130px] " + group}>
            <Select label="第一行单元样式" options={[""]} />
            <Select label="第二行单元样式" options={[""]} />
            <Select label="所有其他行单元样式" options={[""]} />
          </div>
          <div className="mt-auto flex justify-end gap-[11px] pr-px">
            <Btn tone="primary">确定</Btn>
            <Btn>取消</Btn>
            <Btn>帮助<La>(H)</La></Btn>
          </div>
        </div>
      </div>
    </Window>
  );
}

function TableStyleDialog() {
  return (
    <Window title="表格样式" titleClass="h-[30px]" className="top-[194px] left-[399px] w-[489px] shadow-[0_1px_8px_rgba(0,0,0,0.65)]">
      <div className="flex flex-col px-[11px] pt-[5px] pb-[13px]">
        <p className="h-5 leading-5">当前表格样式: <La>Standard</La></p>
        <div className="flex">
          <div className="flex w-[158px] flex-col">
            <label htmlFor="styles" className="h-[22px] leading-5">样式<La>(S):</La></label>
            <ul id="styles" className="h-[163px] border border-[#8b8b8b] bg-white p-px text-[10px]">
              <li className="inline-block bg-[#ececec] px-1 leading-4">Standard</li>
            </ul>
            <label htmlFor="listing" className="h-6 leading-[26px]">列出<La>(L):</La></label>
            <Select id="listing" options={["所有样式"]} />
          </div>
          <div className="ml-[17px] flex w-[207px] flex-col">
            <p className="h-[22px] leading-5">预览: <La>Standard</La></p>
            <div className="flex h-[204px] justify-center border-t border-l border-[#888] bg-[#1d262d]">
              <TablePreview />
            </div>
          </div>
          <div className="ml-3.5 flex flex-1 flex-col gap-[7px] pt-[22px]">
            <Btn w="w-[70px]" h="h-[21px]">置为当前<La>(U)</La></Btn>
            <Btn w="w-[70px]" h="h-[21px]">新建<La>(N)...</La></Btn>
            <Btn w="w-[70px]" h="h-[21px]">修改<La>(M)...</La></Btn>
            <Btn w="w-[70px]" h="h-[21px]" tone="off">删除<La>(D)</La></Btn>
          </div>
        </div>
        <div className="mt-[13px] flex justify-end gap-[13px] pr-0.5">
          <Btn h="h-[21px]">关闭</Btn>
          <Btn h="h-[21px]">帮助<La>(H)</La></Btn>
        </div>
      </div>
    </Window>
  );
}

function NewStyleDialog() {
  const nameRef = useRef(null);
  useEffect(() => {
    nameRef.current.focus();
    nameRef.current.select();
  }, []);
  return (
    <Window title="创建新的表格样式" active titleClass="h-[29px]" className="top-[287px] left-[501px] w-[284px] border border-[#3e9fd6] shadow-[0_2px_10px_rgba(0,0,0,0.45)]">
      <div className="flex justify-between pt-1 pr-3 pb-[17px] pl-2">
        <div className="flex w-[173px] flex-col">
          <label htmlFor="style-name" className="h-[17px] leading-[18px]">新样式名<La>(N):</La></label>
          <input
            id="style-name"
            ref={nameRef}
            defaultValue="Standard 副本"
            className="h-[18px] border border-[#2a7ab8] bg-white px-px text-[10px] outline-none selection:bg-[#0b71cf] selection:text-white"
          />
          <label htmlFor="base-style" className="h-6 pt-[5px] leading-5">基础样式<La>(S):</La></label>
          <Select id="base-style" options={["Standard"]} size="text-[10px]" />
        </div>
        <div className="flex flex-col gap-2.5 pt-[15px]">
          <Btn tone="primary">继续</Btn>
          <Btn>取消</Btn>
          <Btn>帮助<La>(H)</La></Btn>
        </div>
      </div>
    </Window>
  );
}

/* ---------- overlays ---------- */

function VideoMark() {
  return (
    <svg width="200" height="50" viewBox="0 0 200 50" role="img" aria-label="秒dong视频" className="absolute top-[46px] left-[46px] font-['Noto_Sans_CJK_SC',sans-serif]">
      <g fill="#fff" stroke="#26282b" strokeWidth="5" strokeLinejoin="round" paintOrder="stroke" fontWeight="700">
        <text x="5" y="33" fontSize="34" fontStyle="italic">秒</text>
        <g className="font-['Open_Sans',sans-serif]" fontWeight="600">
          <text x="41" y="33" fontSize="33">d</text>
          <text x="81" y="33" fontSize="33">n</text>
          <text x="101" y="33" fontSize="33">g</text>
        </g>
        <text x="121" y="33" fontSize="34" fontStyle="italic">视频</text>
      </g>
      <circle cx="72" cy="24" r="11" fill="#26282b" />
      <circle cx="72" cy="24" r="9.500" fill="#2f7ff0" />
      <path d="M69 19l8 5-8 5z" fill="#fff" />
      <path d="M72 5l3 4 5-5" fill="none" stroke="#26282b" strokeWidth="5" />
      <path d="M72 5l3 4 5-5" fill="none" stroke="#f5cf2c" strokeWidth="2.500" />
    </svg>
  );
}

function TipBox() {
  return (
    <aside className="absolute top-[465px] left-[17px] flex h-[134px] w-[267px] flex-col justify-center bg-[#7fbcff] pb-0.5 font-['Noto_Sans_CJK_SC',sans-serif] text-[20px] leading-[35px] font-medium whitespace-nowrap text-white">
      <p className="pl-14">小提示：</p>
      <p className="pl-1.5">单击表格-选择启动表格样式</p>
      <p className="pl-4">-新建-输入名称-点击继续</p>
    </aside>
  );
}

function SiteMark() {
  return (
    <aside className="absolute top-[587px] left-[974px] flex h-[115px] w-[235px] items-center justify-between bg-[#222f56] pr-3 pl-3.5 text-[#c8cbd0]">
      <svg width="48" height="50" viewBox="0 0 48 50" fill="none" stroke="currentColor" strokeWidth="4" strokeLinecap="round" aria-hidden="true">
        <path d="M2.500 9v30q0 9 9 9 3 0 8-3l21-12q8-7 0-14L22 5q-9-5-11 3v28q1 4 5 1" />
        <path d="M18 18v13l11-6.500z" fill="currentColor" stroke="none" />
        <path d="M31.500 20v9" strokeWidth="2" />
      </svg>
      <div className="flex w-[145px] flex-col pb-0.5">
        <div className="flex justify-between font-['Noto_Sans_CJK_SC',sans-serif] text-[32px] leading-9 font-medium">
          <span>溜</span><span>溜</span><span>自</span><span>学</span>
        </div>
        <p className="font-['DejaVu_Sans',sans-serif] text-[17px] leading-5 whitespace-nowrap">zixue.3D66.COM</p>
      </div>
    </aside>
  );
}

function ImeTray() {
  return (
    <div className="absolute top-[693px] right-0 flex h-[27px] w-[156px] items-center gap-[9px] overflow-hidden bg-[#f3f6fb] pt-1 text-[#2d6fd6]">
      <span className="-mt-3 -ml-1 flex h-[34px] w-9 shrink-0 items-center justify-center rounded-full bg-[#1f78ee] font-['Open_Sans',sans-serif] text-xl font-bold text-white italic">du</span>
      <span className="text-[15px] font-bold">中</span>
      <Svg size={14}><circle cx="4" cy="4" r="2.500" strokeWidth="1.800" /><path d="M12 9q2 3-2 6" strokeWidth="3" /></Svg>
      <Svg><path d="M1 5h14v10H1zM5 5V2h6v3M1 10h14M8 8v3" strokeWidth="2" /></Svg>
      <Svg className="text-[#b9cbe6]"><circle cx="8" cy="5" r="4" strokeWidth="1.500" /><path d="M1 15q0-5 5-5h4q5 0 5 5z" strokeWidth="1.500" /></Svg>
      <Svg><path d="M1 1h5v5H1zM10 1h5v5h-5zM1 10h5v5H1zM10 10h5v5h-5z" strokeWidth="1.800" /></Svg>
    </div>
  );
}

export default function App() {
  return (
    <div className={"relative flex min-h-screen flex-col overflow-hidden bg-[#363636] " + UI}>
      <Header />
      <Ribbon />
      <DocTabs />
      <Canvas />
      <Footer />

      <InsertTableDialog />
      <TableStyleDialog />
      <NewStyleDialog />
      <svg width="14" height="20" viewBox="0 0 14 20" aria-hidden="true" className="absolute top-[301px] left-[837px]">
        <path d="M1 1v15l4-3 2.500 6 2.500-1-2.500-6h5z" fill="#fff" stroke="#222" />
      </svg>
      <VideoMark />
      <TipBox />
      <SiteMark />
      <ImeTray />
    </div>
  );
}
